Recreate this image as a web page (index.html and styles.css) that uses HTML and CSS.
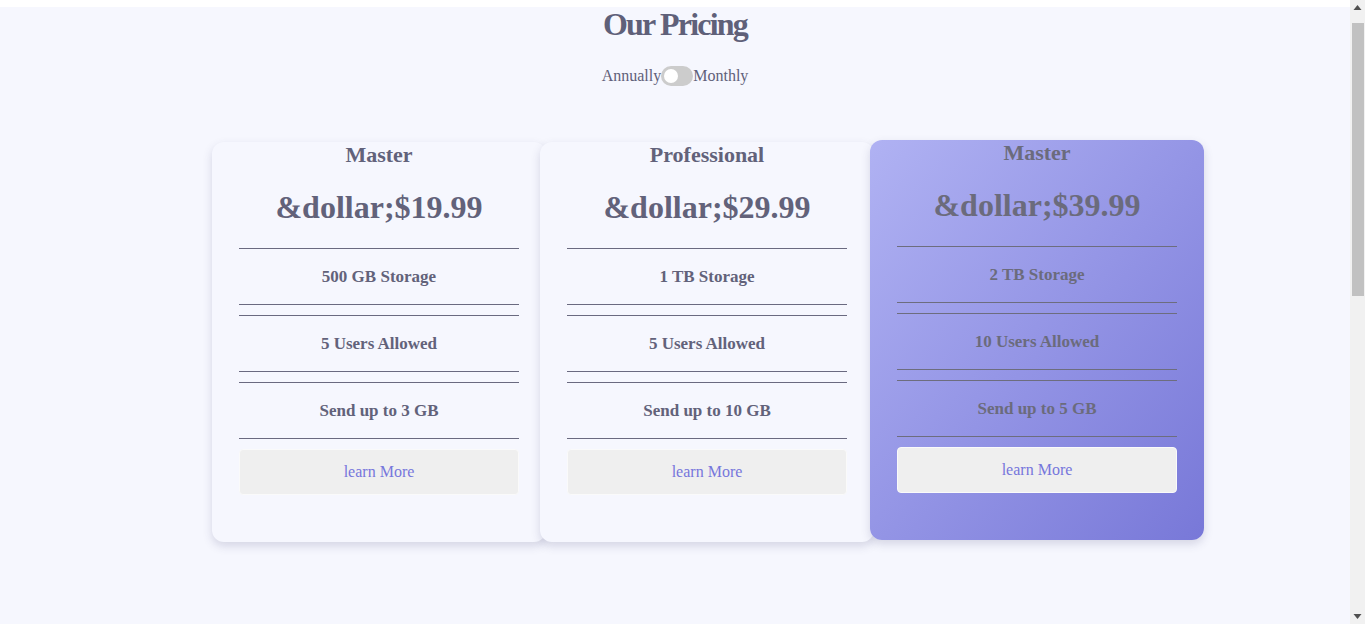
FILE: index.html
```html
<!DOCTYPE html>
<html lang="en">
<head>
<meta charset="utf-8">
<title>Our Pricing</title>
<link rel="stylesheet" href="styles.css">
</head>
<body>
<div class="page">
  <h1 class="heading">Our Pricing</h1>
  <div class="switch-row">
    <span>Annually</span>
    <span class="toggle"><span class="knob"></span></span>
    <span>Monthly</span>
  </div>
  <div class="cards">
    <div class="card">
      <h3 class="plan">Master</h3>
      <h2 class="price">&amp;dollar;$19.99</h2>
      <div class="feature">500 GB Storage</div>
      <div class="feature">5 Users Allowed</div>
      <div class="feature">Send up to 3 GB</div>
      <button class="btn">learn More</button>
    </div>
    <div class="card card-mid">
      <h3 class="plan">Professional</h3>
      <h2 class="price">&amp;dollar;$29.99</h2>
      <div class="feature">1 TB Storage</div>
      <div class="feature">5 Users Allowed</div>
      <div class="feature">Send up to 10 GB</div>
      <button class="btn">learn More</button>
    </div>
    <div class="card card-active">
      <h3 class="plan">Master</h3>
      <h2 class="price">&amp;dollar;$39.99</h2>
      <div class="feature">2 TB Storage</div>
      <div class="feature">10 Users Allowed</div>
      <div class="feature">Send up to 5 GB</div>
      <button class="btn">learn More</button>
    </div>
  </div>
</div>
<div class="scrollbar" aria-hidden="true">
  <svg class="sb-arrow" width="15" height="17" viewBox="0 0 15 17"><polygon points="7.5,5 11.5,10 3.5,10" fill="#505050"/></svg>
  <div class="sb-thumb"></div>
  <div class="sb-fill"></div>
  <svg class="sb-arrow" width="15" height="17" viewBox="0 0 15 17"><polygon points="3.5,7 11.5,7 7.5,12" fill="#505050"/></svg>
</div>
</body>
</html>
```
FILE: styles.css
```css
html, body {
  margin: 0;
  padding: 0;
  background: #ffffff;
}
body {
  font-family: "Liberation Serif", "Times New Roman", serif;
  color: #62627a;
}
.page {
  margin-top: 7px;
  padding-right: 15px;
  background: #f6f7fe;
  min-height: 1332px;
  display: flex;
  flex-direction: column;
  align-items: center;
}
.heading {
  margin: 0;
  font-size: 32px;
  font-weight: bold;
  letter-spacing: -1.8px;
  line-height: 35px;
  color: #5f6079;
}
.switch-row {
  margin-top: 24px;
  display: flex;
  align-items: center;
  font-size: 16px;
  color: #5f6079;
  height: 20px;
}
.toggle {
  width: 32px;
  height: 20px;
  border-radius: 10px;
  background: #cccccc;
  display: flex;
  align-items: center;
  padding-left: 3px;
  box-sizing: border-box;
}
.knob {
  width: 14px;
  height: 14px;
  border-radius: 50%;
  background: #ffffff;
}
.cards {
  margin-top: 56px;
  align-self: flex-start;
  margin-left: 212px;
  display: flex;
}
.card {
  width: 334px;
  height: 400px;
  box-sizing: border-box;
  padding: 0 27px;
  background: #f6f7fe;
  border-radius: 12px;
  box-shadow: 0 4px 10px rgba(60, 60, 110, 0.18);
  display: flex;
  flex-direction: column;
  align-items: stretch;
  text-align: center;
  position: relative;
}
.card-mid {
  margin-left: -6px;
}
.card-active {
  margin-left: -4px;
  background: linear-gradient(to bottom right, #b0b2f3, #7878d8);
  transform: translateY(-2px);
  color: #6b6b7c;
}
.plan {
  margin: 0;
  font-size: 22px;
  line-height: 25px;
  font-weight: bold;
}
.price {
  margin: 22px 0 22px;
  font-size: 32px;
  line-height: 37px;
  font-weight: bold;
}
.feature {
  border-top: 1px solid #6a6a80;
  border-bottom: 1px solid #6a6a80;
  padding: 18px 0 17px;
  line-height: 20px;
  font-size: 17px;
  font-weight: bold;
}
.card-active .feature {
  border-color: #6d6d7e;
}
.feature + .feature {
  margin-top: 10px;
}
.btn {
  margin-top: 10px;
  height: 46px;
  background: #efefef;
  border: 1px solid #fafafa;
  border-radius: 4px;
  font-family: "Liberation Serif", "Times New Roman", serif;
  font-size: 16px;
  color: #7676dc;
  padding: 0;
}
.scrollbar {
  position: fixed;
  top: 0;
  right: 0;
  width: 15px;
  height: 100vh;
  background: #f1f1f1;
  display: flex;
  flex-direction: column;
  align-items: center;
}
.sb-arrow {
  display: block;
  flex: none;
}
.sb-thumb {
  margin-top: 6px;
  width: 12px;
  height: 273px;
  background: #c1c1c1;
  flex: none;
}
.sb-fill {
  flex: 1;
}
```
